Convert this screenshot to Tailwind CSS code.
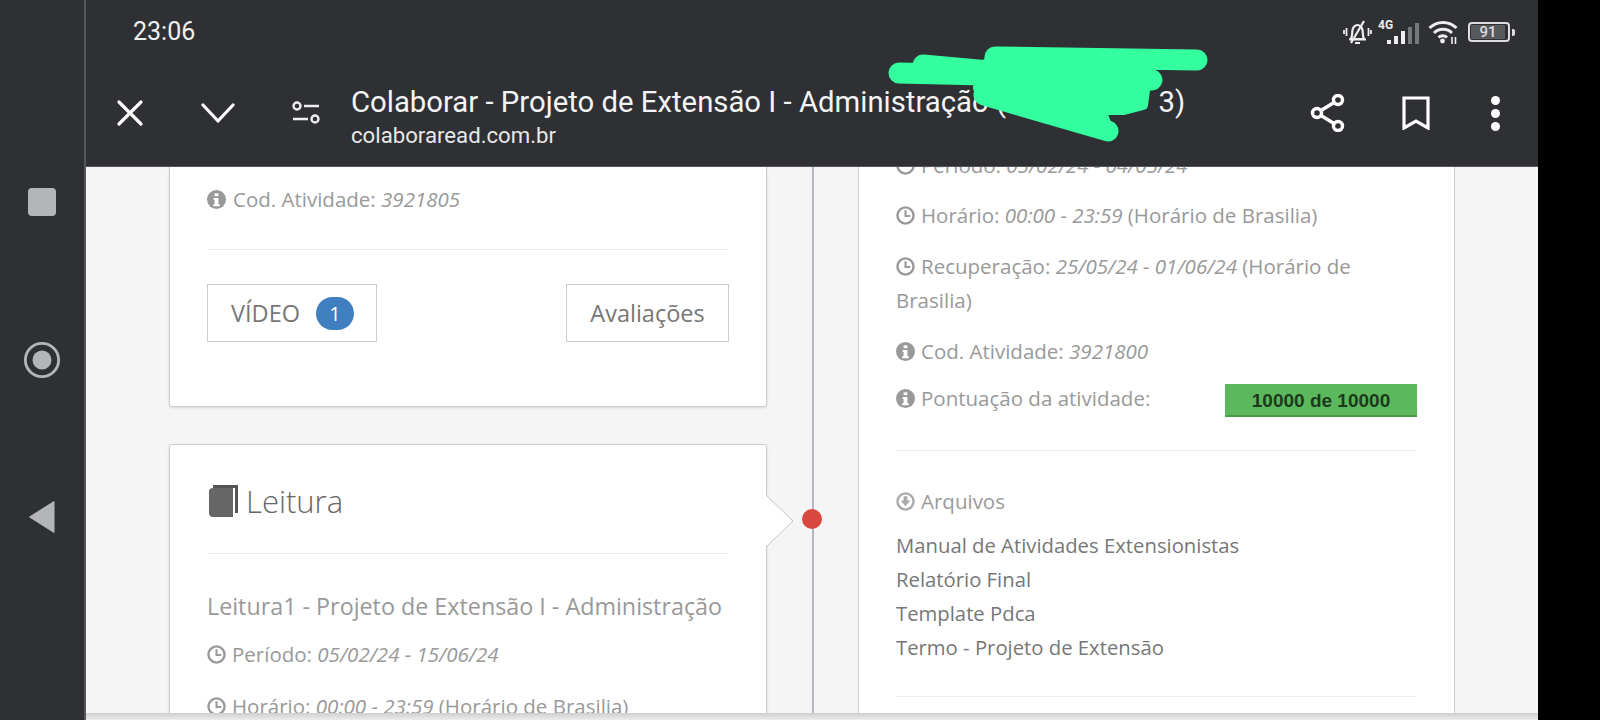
<!DOCTYPE html>
<html lang="pt-BR">
<head>
    <meta charset="UTF-8">
    <title>Colaborar - Projeto de Extensão I</title>
    <script src="https://cdn.jsdelivr.net/npm/@tailwindcss/browser@4"></script>
</head>
<body class="bg-black">
<div class="relative w-[1600px] h-[720px] flex overflow-hidden bg-black font-['Open_Sans',sans-serif]">

    <!-- Android nav rail -->
    <aside class="w-[86px] shrink-0 bg-[#2f3034] border-r-2 border-[#55565a] flex flex-col items-center pt-[188px] gap-[125px]">
        <div class="w-[28px] h-[28px] rounded-[4px] bg-[#b4b5b9]"></div>
        <svg class="w-[38px] h-[38px]" viewBox="0 0 40 40"><circle cx="20" cy="20" r="17.5" fill="none" stroke="#b4b5b9" stroke-width="3"/><circle cx="20" cy="20" r="10" fill="#b4b5b9"/></svg>
        <svg class="-mt-[4px] w-[28px] h-[34px]" viewBox="0 0 28 34"><path d="M1.5 17 26 1.5V32.5Z" fill="#b4b5b9" stroke="#b4b5b9" stroke-linejoin="round"/></svg>
    </aside>

    <main class="w-[1452px] shrink-0 flex flex-col">
        <!-- top bar -->
        <header class="h-[167px] shrink-0 bg-[#2f3034] border-b border-[#55565a] text-white font-['Roboto',sans-serif]">
            <div class="h-[64px] flex items-center justify-between pl-[47px] pr-[23px]">
                <span class="text-[25px] text-[#f0f0f0]">23:06</span>
                <div class="flex items-center">
                    <svg class="w-[29px] h-[25px]" viewBox="0 0 29 25" fill="none" stroke="#eee" stroke-width="2.200"><path d="M8 19c1.500-3 1-6 1.500-9 .5-3 3-5 5-5s4.500 2 5 5c.5 3 0 6 1.500 9Z"/><path d="M6 19.500h17M12 23h5M21 1 8 23"/><path d="M3.500 8v8M1 10v4M25.500 8v8M28 10v4" stroke-width="1.800"/></svg>
                    <div class="relative w-[41px] h-[25px] ml-[6px]">
                        <span class="absolute left-0 top-[-2px] text-[12px] leading-[14px] font-bold text-[#eee]">4G</span>
                        <div class="absolute right-0 bottom-[1px] flex items-end gap-[3px]">
                            <i class="block w-[4px] h-[4px] bg-[#eee]"></i><i class="block w-[4px] h-[8px] bg-[#eee]"></i><i class="block w-[4px] h-[13px] bg-[#eee]"></i><i class="block w-[4px] h-[17px] bg-[#77787b]"></i><i class="block w-[4px] h-[21px] bg-[#77787b]"></i>
                        </div>
                    </div>
                    <svg class="w-[30px] h-[24px] ml-[9px]" viewBox="0 0 30 24" fill="none" stroke="#eee" stroke-width="3"><path d="M1.500 8C9 .5 21 .5 28.500 8M6 13c5-5 13-5 18 0M10.500 17.500c2.500-2.500 6-2.500 8.500 0"/><circle cx="14.500" cy="21" r="2.400" fill="#eee" stroke="none"/><path d="M24 17v7M27.500 17v7" stroke-width="1.600"/></svg>
                    <div class="ml-[10px] w-[42px] h-[20px] rounded-[4px] border-2 border-[#ddd] p-[1px]">
                        <div class="h-full w-[34px] rounded-[1px] bg-[#58595c] text-[15px] leading-[14px] font-medium text-center text-[#ddd]">91</div>
                    </div>
                    <div class="w-[3px] h-[7px] ml-[2px] rounded-r-[2px] bg-[#ddd]"></div>
                </div>
            </div>
            <div class="h-[98px] flex items-center">
                <div class="w-[88px] flex justify-center">
                    <svg class="w-[30px] h-[30px]" viewBox="0 0 30 30" fill="none" stroke="#fff" stroke-width="3.200" stroke-linecap="round"><path d="M4 4l22 22M26 4 4 26"/></svg>
                </div>
                <div class="w-[88px] flex justify-center">
                    <svg class="w-[34px] h-[22px]" viewBox="0 0 34 22" fill="none" stroke="#fff" stroke-width="3.200" stroke-linecap="round" stroke-linejoin="round"><path d="M2 3l15 16L32 3"/></svg>
                </div>
                <div class="w-[88px] flex justify-center">
                    <svg class="w-[30px] h-[24px]" viewBox="0 0 30 24" fill="none" stroke="#eee" stroke-width="2.400"><circle cx="6" cy="5" r="3.500"/><path d="M13 5h15M2 18h15"/><circle cx="24" cy="18" r="3.500"/></svg>
                </div>
                <div class="flex-1 self-start mt-[20px] pl-[1px] whitespace-nowrap overflow-hidden">
                    <div class="text-[29.300px] leading-[36px] text-[#f4f4f4]">Colaborar - Projeto de Extensão I - Administração (&nbsp;&nbsp;&nbsp;&nbsp;&nbsp;&nbsp;&nbsp;&nbsp;&nbsp;&nbsp;&nbsp;&nbsp;&nbsp;&nbsp;&nbsp;&nbsp;&nbsp;&nbsp;&nbsp;&nbsp;&nbsp;3)</div>
                    <div class="text-[22.200px] leading-[30px] text-[#e8e8e8]">colaboraread.com.br</div>
                </div>
                <div class="w-[88px] flex justify-center">
                    <svg class="w-[36px] h-[38px]" viewBox="0 0 36 38" fill="none" stroke="#fff" stroke-width="3.400"><circle cx="7" cy="19" r="4.500"/><circle cx="28" cy="6" r="4.500"/><circle cx="28" cy="32" r="4.500"/><path d="M11 16.500 24 8.500M11 21.500l13 8"/></svg>
                </div>
                <div class="w-[88px] flex justify-center">
                    <svg class="w-[28px] h-[34px]" viewBox="0 0 28 34" fill="none" stroke="#fff" stroke-width="3.200"><path d="M2 2h24v30L14 25 2 32Z"/></svg>
                </div>
                <div class="w-[70px] mr-[8px] flex flex-col items-center gap-[4px]">
                    <i class="block w-[9px] h-[9px] rounded-full bg-white"></i><i class="block w-[9px] h-[9px] rounded-full bg-white"></i><i class="block w-[9px] h-[9px] rounded-full bg-white"></i>
                </div>
            </div>
        </header>

        <!-- page content -->
        <section class="flex-1 min-h-0 overflow-hidden bg-[#f5f5f5] grid grid-cols-[598px_91px_597px] pl-[83px] text-[20.500px] leading-[30px] text-[#999]">
            <!-- left column -->
            <div>
                <div class="h-[240px] bg-white border border-t-0 border-[#ccc] rounded-b-[3px] shadow-sm px-[37px] pt-[17px]">
                    <p class="flex items-center">
                        <svg class="w-[19px] h-[19px] mr-[7px]" viewBox="0 0 20 20"><circle cx="10" cy="10" r="10" fill="#999"/><rect x="8" y="3.500" width="4" height="3" fill="#fff"/><path d="M7 8.500h5v6.500h1.500v2h-7v-2H8v-4.500H7Z" fill="#fff"/></svg>
                        <span>Cod. Atividade: <em>3921805</em></span>
                    </p>
                    <hr class="mt-[35px] border-[#eee]">
                    <div class="mt-[34px] flex justify-between text-[#777] text-[23.500px]">
                        <div class="w-[170px] h-[58px] border border-[#ccc] flex items-center pl-[23px]">
                            <span>VÍDEO</span>
                            <span class="ml-[16px] w-[38px] h-[33px] rounded-full bg-[#3f7fbf] text-white text-center leading-[33px] text-[20px]">1</span>
                        </div>
                        <div class="w-[163px] h-[58px] border border-[#ccc] flex items-center justify-center">Avaliações</div>
                    </div>
                </div>

                <div class="relative mt-[37px] h-[340px] bg-white border border-[#ccc] rounded-[3px] shadow-sm px-[37px] pt-[32px]">
                    <h3 class="flex items-center h-[48px] text-[31px] font-light text-[#666]">
                        <svg class="ml-[2px] w-[29px] h-[32px] mr-[8px]" viewBox="0 0 29 32"><path d="M4 0h25v28h-3V3H4Z" fill="#555"/><path d="M4 3h20v29H4c-2 0-4-1-4-4V6c0-2 2-3 4-3Z" fill="#666"/></svg>
                        Leitura
                    </h3>
                    <hr class="mt-[28px] border-[#eee]">
                    <p class="mt-[37px] text-[23.300px] leading-[30px]">Leitura1 - Projeto de Extensão I - Administração</p>
                    <p class="mt-[18px] flex items-center">
                        <svg class="w-[19px] h-[19px] mr-[6px]" viewBox="0 0 20 20" fill="none" stroke="#999" stroke-width="2.500"><circle cx="10" cy="10" r="8.500"/><path d="M10 4.500V10.500H15" stroke-width="2.200"/></svg>
                        <span>Período: <em>05/02/24 - 15/06/24</em></span>
                    </p>
                    <p class="mt-[22px] flex items-center">
                        <svg class="w-[19px] h-[19px] mr-[6px]" viewBox="0 0 20 20" fill="none" stroke="#999" stroke-width="2.500"><circle cx="10" cy="10" r="8.500"/><path d="M10 4.500V10.500H15" stroke-width="2.200"/></svg>
                        <span>Horário: <em>00:00 - 23:59</em> (Horário de Brasilia)</span>
                    </p>
                    <!-- arrow towards the timeline -->
                    <svg class="absolute left-full top-[50px] w-[28px] h-[52px]" viewBox="0 0 28 52"><path d="M0 0 27 26 0 52" fill="#fff" stroke="#c4c4c4"/></svg>
                </div>
            </div>

            <!-- timeline -->
            <div class="relative flex justify-center">
                <div class="w-[2px] h-full bg-[#b4b8c4]"></div>
                <span class="absolute left-[35px] top-[342px] w-[20px] h-[20px] rounded-full bg-[#d9473f]"></span>
            </div>

            <!-- right column -->
            <div class="bg-white border-x border-[#ccc] px-[37px]">
                <p class="-mt-[17px] flex items-center">
                    <svg class="w-[19px] h-[19px] mr-[6px]" viewBox="0 0 20 20" fill="none" stroke="#999" stroke-width="2.500"><circle cx="10" cy="10" r="8.500"/><path d="M10 4.500V10.500H15" stroke-width="2.200"/></svg>
                    <span>Período: <em>05/02/24 - 04/05/24</em></span>
                </p>
                <p class="mt-[20px] flex items-center">
                    <svg class="w-[19px] h-[19px] mr-[6px]" viewBox="0 0 20 20" fill="none" stroke="#999" stroke-width="2.500"><circle cx="10" cy="10" r="8.500"/><path d="M10 4.500V10.500H15" stroke-width="2.200"/></svg>
                    <span>Horário: <em>00:00 - 23:59</em> (Horário de Brasilia)</span>
                </p>
                <p class="mt-[19px] leading-[34px]">
                    <svg class="inline-block align-[-2px] w-[19px] h-[19px] mr-[6px]" viewBox="0 0 20 20" fill="none" stroke="#999" stroke-width="2.500"><circle cx="10" cy="10" r="8.500"/><path d="M10 4.500V10.500H15" stroke-width="2.200"/></svg>Recuperação: <em>25/05/24 - 01/06/24</em> (Horário de Brasilia)
                </p>
                <p class="mt-[19px] flex items-center">
                    <svg class="w-[19px] h-[19px] mr-[6px]" viewBox="0 0 20 20"><circle cx="10" cy="10" r="10" fill="#999"/><rect x="8" y="3.500" width="4" height="3" fill="#fff"/><path d="M7 8.500h5v6.500h1.500v2h-7v-2H8v-4.500H7Z" fill="#fff"/></svg>
                    <span>Cod. Atividade: <em>3921800</em></span>
                </p>
                <div class="mt-[17px] flex items-start justify-between h-[36px]">
                    <p class="flex items-center">
                        <svg class="w-[19px] h-[19px] mr-[6px]" viewBox="0 0 20 20"><circle cx="10" cy="10" r="10" fill="#999"/><rect x="8" y="3.500" width="4" height="3" fill="#fff"/><path d="M7 8.500h5v6.500h1.500v2h-7v-2H8v-4.500H7Z" fill="#fff"/></svg>
                        <span>Pontuação da atividade:</span>
                    </p>
                    <div class="w-[192px] h-[33px] mt-[1px] bg-[#5cb85c] border-b-2 border-[#4a9a4a] text-center text-[19px] leading-[33px] font-bold text-[#1c3a1c] font-['Liberation_Sans',sans-serif]">10000 de 10000</div>
                </div>
                <hr class="mt-[31px] border-[#eee]">
                <p class="mt-[35px] flex items-center">
                    <svg class="w-[19px] h-[19px] mr-[6px]" viewBox="0 0 20 20"><circle cx="10" cy="10" r="8.500" fill="none" stroke="#aaa" stroke-width="2.500"/><path d="M8 4.500h4V9h3l-5 6-5-6h3Z" fill="#aaa"/></svg>
                    <span>Arquivos</span>
                </p>
                <ul class="mt-[12px] text-[#777] text-[20.300px] leading-[34px]">
                    <li>Manual de Atividades Extensionistas</li>
                    <li>Relatório Final</li>
                    <li>Template Pdca</li>
                    <li>Termo - Projeto de Extensão</li>
                </ul>
                <hr class="mt-[32px] border-[#eee]">
            </div>
        </section>
    </main>

    <!-- green scribble over the title -->
    <svg class="absolute left-0 top-0 w-[1600px] h-[720px] pointer-events-none" viewBox="0 0 1600 720">
        <path d="M990 60 1091 64 1150 80 1145 90 1143 105 1124 110 1101 110 1108 128 978 88 980 70Z" fill="#33ff9f" stroke="#33ff9f" stroke-width="10" stroke-linejoin="round"/>
        <path d="M899 73 985 75M923 65 1000 72M995 57 1197 60M1090 64 1152 80M984 95 1108 131" fill="none" stroke="#33ff9f" stroke-width="21" stroke-linecap="round"/>
    </svg>

    <!-- bottom edge of the webview -->
    <div class="absolute left-[86px] bottom-0 w-[1452px] h-[7px] bg-gradient-to-b from-[#cfcfcf] to-[#ececec]"></div>
</div>
</body>
</html>
